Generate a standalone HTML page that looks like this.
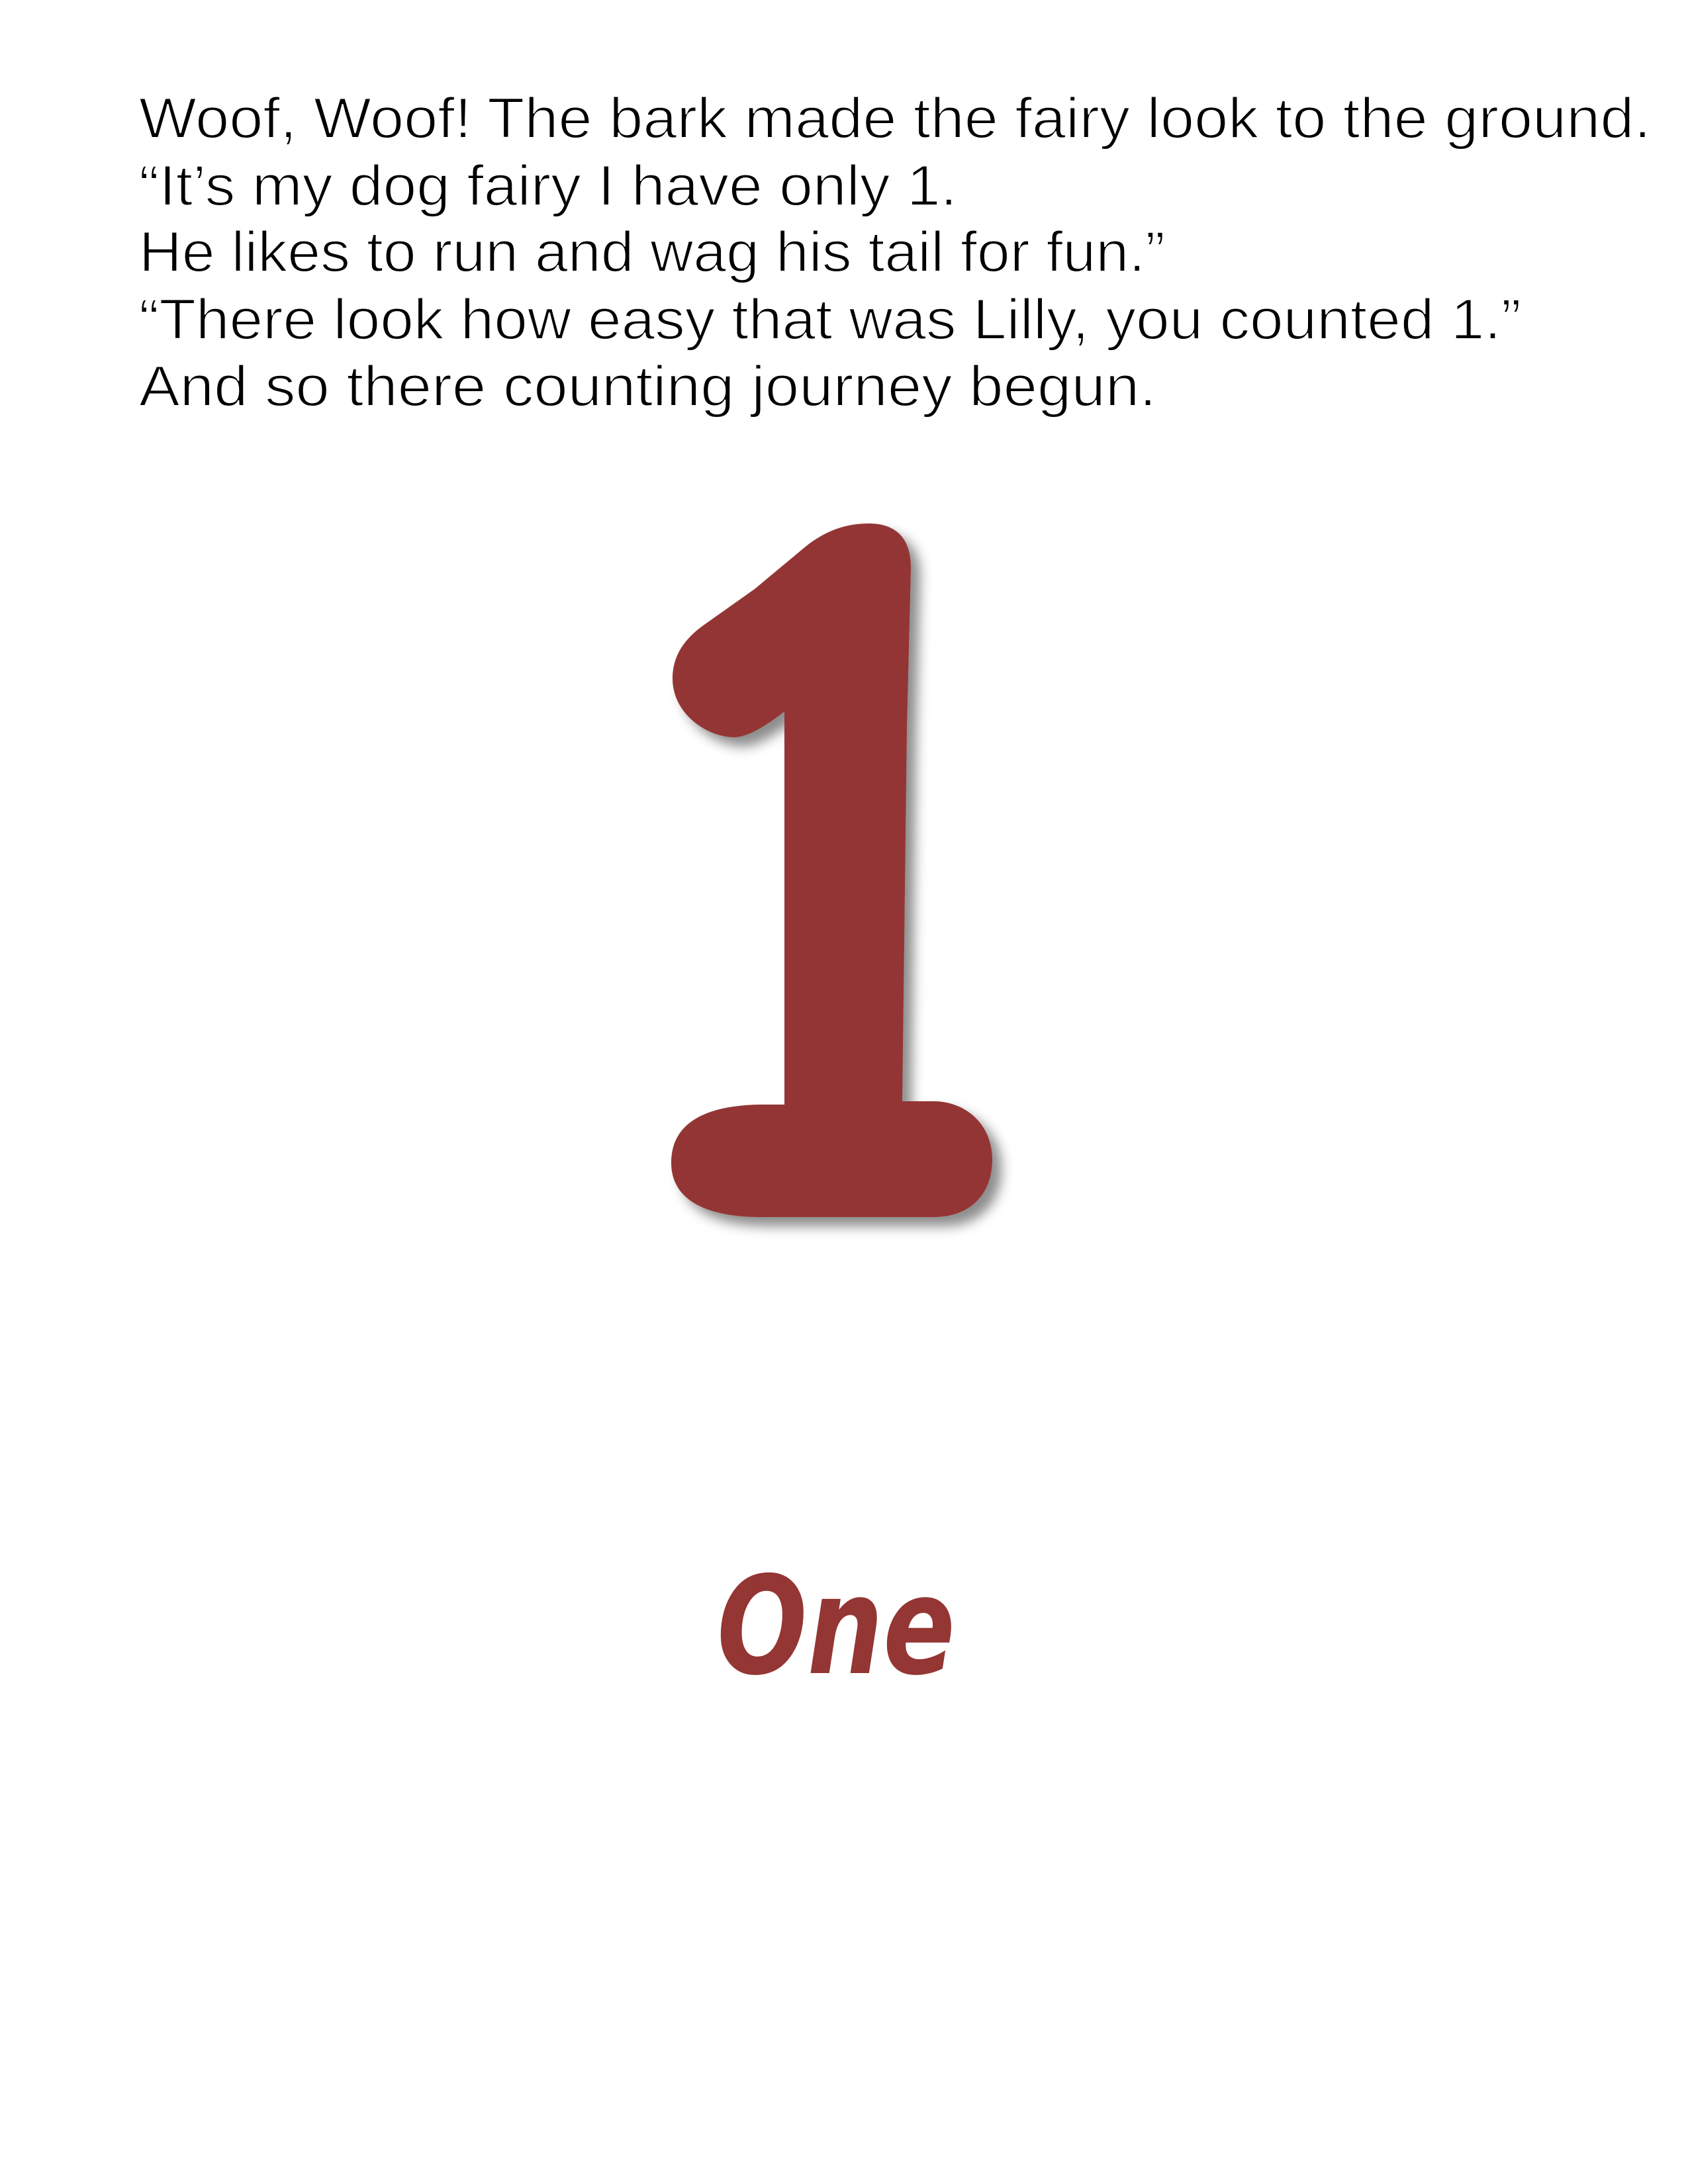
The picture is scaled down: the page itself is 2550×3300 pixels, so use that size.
<!DOCTYPE html>
<html><head><meta charset="utf-8"><style>
html,body{margin:0;padding:0;background:#fff;}
svg{display:block}
</style></head><body>
<svg width="2550" height="3300" viewBox="0 0 2550 3300" xmlns="http://www.w3.org/2000/svg">
<defs>
<filter id="sh" x="-20%" y="-20%" width="150%" height="150%">
<feDropShadow dx="14" dy="14" stdDeviation="9" flood-color="#000" flood-opacity="0.45"/>
</filter>
</defs>
<g font-family="'Liberation Sans', sans-serif" font-size="86" fill="#000" stroke="#fff" stroke-width="2">
<text x="210" y="208" textLength="2284" lengthAdjust="spacingAndGlyphs">Woof, Woof! The bark made the fairy look to the ground.</text>
<text x="210" y="310" textLength="1236" lengthAdjust="spacingAndGlyphs">“It’s my dog fairy I have only 1.</text>
<text x="210" y="410" textLength="1550" lengthAdjust="spacingAndGlyphs">He likes to run and wag his tail for fun.”</text>
<text x="210" y="512" textLength="2088" lengthAdjust="spacingAndGlyphs">“There look how easy that was Lilly, you counted 1.”</text>
<text x="210" y="613" textLength="1537" lengthAdjust="spacingAndGlyphs">And so there counting journey begun.</text>
</g>
<path filter="url(#sh)" fill="#943634" d="M1185,1075 L1185,1669 L1150,1669 C1060,1670 1014,1700 1014,1757 C1014,1815 1070,1839 1150,1839 L1410,1839 C1470,1839 1499,1800 1499,1752 C1499,1700 1460,1664 1410,1664 L1363,1664 L1370,1100 L1376,860 C1377,810 1350,791 1313,791 C1280,791 1250,800 1218,825 L1140,890 L1061,946 C1035,965 1016,990 1016,1025 C1016,1080 1070,1114 1109,1114 C1130,1114 1160,1095 1185,1075 Z"/>
<text x="1083" y="2528" font-family="'DejaVu Sans', sans-serif" font-weight="bold" font-style="oblique" font-size="205" fill="#943634" textLength="360" lengthAdjust="spacingAndGlyphs">One</text>
</svg>
</body></html>
